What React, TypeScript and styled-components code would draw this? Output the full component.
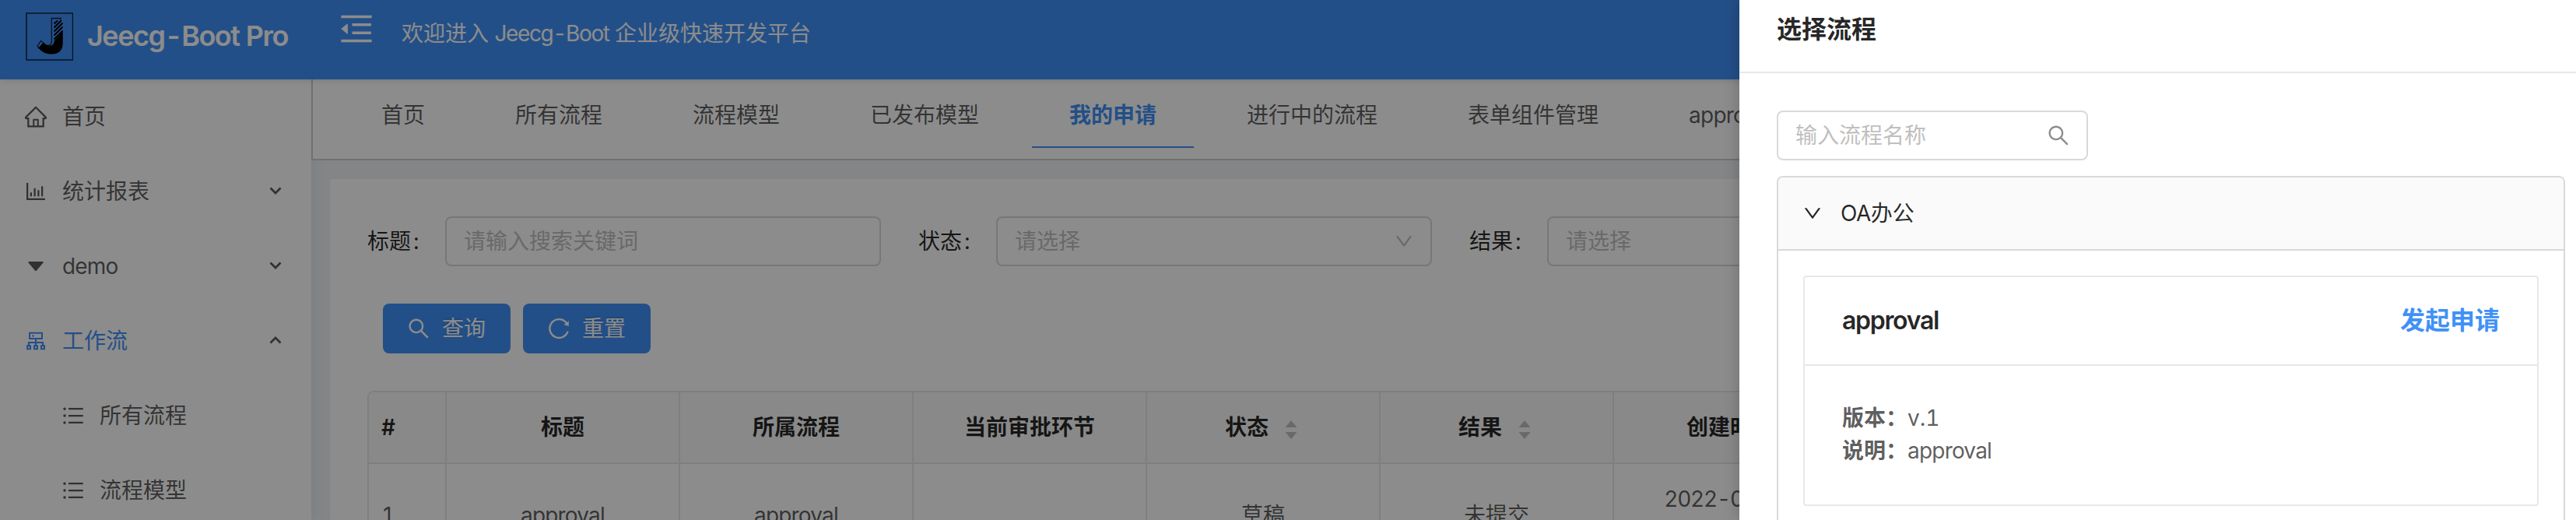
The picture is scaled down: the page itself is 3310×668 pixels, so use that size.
import React from 'react';
import styled, { createGlobalStyle, css } from 'styled-components';
import {
  AiOutlineHome,
  AiOutlineBarChart,
  AiOutlineCluster,
  AiOutlineBars,
  AiOutlineSearch,
  AiOutlineReload,
  AiOutlineDown,
  AiOutlineMenuFold,
} from 'react-icons/ai';

const color = {
  primary: '#4091f7',
  heading: 'rgba(0, 0, 0, 0.85)',
  text: 'rgba(0, 0, 0, 0.65)',
  muted: 'rgba(0, 0, 0, 0.45)',
  placeholder: '#bfbfbf',
  border: '#d9d9d9',
  split: '#e8e8e8',
  soft: '#fafafa',
  page: '#f0f2f5',
};

const GlobalStyle = createGlobalStyle`
  *, *::before, *::after { box-sizing: border-box; }
  body {
    margin: 0;
    overflow: hidden;
    font-family: Inter, 'Noto Sans CJK SC', sans-serif;
    font-size: 28px;
    line-height: 42px;
    color: ${color.text};
    font-variant-numeric: tabular-nums;
  }
`;

const Screen = styled.div`
  position: relative;
  width: 3310px;
  height: 668px;
  overflow: hidden;
  background: ${color.page};
`;

const Shell = styled.div`
  display: flex;
  flex-direction: column;
  height: 100%;
`;

const Latin = styled.span<{ $tight?: number }>`
  letter-spacing: ${(p) => -(p.$tight ?? 0.8)}px;
`;

/* ---------- top bar ---------- */

const TopBar = styled.header`
  position: relative;
  z-index: 3;
  display: flex;
  flex: none;
  height: 102px;
  background: ${color.primary};
  color: #fff;
  box-shadow: 0 2px 8px rgba(0, 21, 41, 0.12);
`;

const Brand = styled.div`
  display: flex;
  align-items: flex-start;
  width: 400px;
  padding: 16px 0 0 33px;
`;

const BrandName = styled.h1`
  margin: 9px 0 0 18px;
  font-size: 36px;
  line-height: 42px;
  font-weight: 600;
  letter-spacing: -1.5px;
  white-space: nowrap;
`;

const FoldButton = styled.span`
  display: flex;
  padding: 15px 0 0 36px;
  font-size: 44px;
`;

const Welcome = styled.span`
  margin: 22px 0 0 36px;
  white-space: nowrap;
`;

/* ---------- side menu ---------- */

const Body = styled.div`
  display: flex;
  flex: 1;
  min-height: 0;
`;

const Sider = styled.nav`
  position: relative;
  z-index: 1;
  flex: none;
  width: 400px;
  background: #fff;
  box-shadow: 4px 0 16px rgba(29, 35, 41, 0.05);
`;

const MenuItem = styled.div<{ $active?: boolean; $nested?: boolean }>`
  display: flex;
  align-items: center;
  height: 96px;
  padding: 0 38px 0 ${(p) => (p.$nested ? 80 : 32)}px;
  color: ${(p) => (p.$active ? color.primary : color.text)};
`;

const MenuIcon = styled.span`
  display: flex;
  flex: none;
  width: 28px;
  margin-right: 20px;
`;

const MenuLabel = styled.span`
  flex: 1;
`;

const Chevron = styled.svg`
  width: 16px;
  height: 12px;
  margin-top: -3px;
  fill: none;
  stroke: ${color.text};
  stroke-width: 2.7;
`;

/* ---------- main area ---------- */

const Main = styled.main`
  display: flex;
  flex: 1;
  flex-direction: column;
  min-width: 0;
`;

const TabBar = styled.div`
  position: relative;
  z-index: 2;
  display: flex;
  flex: none;
  gap: 20px;
  height: 104px;
  padding-left: 40px;
  background: #fff;
  border: solid #ccc;
  border-width: 0 0 2px 2px;
`;

const Tab = styled.div<{ $active?: boolean }>`
  height: 88px;
  padding: 25px 48px 0;
  white-space: nowrap;
  border-bottom: 2px solid transparent;
  ${(p) =>
    p.$active &&
    css`
      color: ${color.primary};
      font-weight: 700;
      border-bottom-color: ${color.primary};
    `}
`;

const Card = styled.section`
  flex: 1;
  margin: 24px 0 0 24px;
  padding: 48px;
  background: #fff;
  border-radius: 4px;
  overflow: hidden;
`;

const SearchForm = styled.div`
  display: flex;
  gap: 48px;
`;

const Field = styled.div`
  display: flex;
  align-items: center;
  flex: none;
`;

const FieldLabel = styled.label`
  width: 100px;
  color: ${color.heading};
  &::after {
    content: ':';
    margin-left: 3px;
  }
`;

const Control = styled.div<{ $width: number }>`
  display: flex;
  align-items: center;
  justify-content: space-between;
  width: ${(p) => p.$width}px;
  height: 64px;
  padding: 0 22px;
  color: ${color.placeholder};
  background: #fff;
  border: 2px solid ${color.border};
  border-radius: 8px;
`;

const ControlIcon = styled.span<{ $tone?: string }>`
  display: flex;
  color: ${(p) => p.$tone ?? color.placeholder};
`;

const Actions = styled.div`
  display: flex;
  gap: 16px;
  margin: 48px 0 48px 20px;
`;

const Button = styled.button`
  display: flex;
  align-items: center;
  gap: 16px;
  height: 64px;
  padding: 0 32px;
  border: 0;
  border-radius: 8px;
  background: ${color.primary};
  color: #fff;
  font: inherit;
  text-shadow: 0 -2px 0 rgba(0, 0, 0, 0.12);
`;

/* ---------- table ---------- */

const Table = styled.div`
  width: 2740px;
  border: solid ${color.split};
  border-width: 2px 0 0 2px;
  border-radius: 8px 0 0 0;
  overflow: hidden;
`;

const Row = styled.div<{ $head?: boolean }>`
  display: grid;
  grid-template-columns: 100px repeat(8, 300px);
  height: ${(p) => (p.$head ? 92 : 134)}px;
  border-bottom: 2px solid ${color.split};
  ${(p) =>
    p.$head &&
    css`
      background: ${color.soft};
      color: ${color.heading};
      font-weight: 600;
    `}
`;

const Cell = styled.div<{ $left?: boolean }>`
  display: flex;
  align-items: center;
  justify-content: ${(p) => (p.$left ? 'flex-start' : 'center')};
  padding: 0 16px;
  text-align: center;
  border-right: 2px solid ${color.split};
`;

const Sorter = styled.svg`
  width: 16px;
  height: 24px;
  margin: 5px 5px 0 21px;
  fill: ${color.placeholder};
`;

/* ---------- drawer ---------- */

const Mask = styled.div`
  position: absolute;
  inset: 0;
  z-index: 10;
  background: rgba(0, 0, 0, 0.45);
`;

const Drawer = styled.aside`
  position: absolute;
  top: 0;
  right: 0;
  bottom: 0;
  z-index: 11;
  width: 1075px;
  background: #fff;
  box-shadow: -4px 0 16px rgba(0, 0, 0, 0.15);
`;

const DrawerTitle = styled.h2`
  height: 94px;
  margin: 0;
  padding: 16px 48px 0;
  font-size: 32px;
  line-height: 44px;
  font-weight: 600;
  color: ${color.heading};
  border-bottom: 2px solid ${color.split};
`;

const DrawerBody = styled.div`
  display: flex;
  flex-direction: column;
  gap: 20px;
  padding: 48px 14px 0 48px;
`;

const Collapse = styled.div`
  height: 520px;
  border: 2px solid ${color.border};
  border-radius: 8px;
  overflow: hidden;
`;

const CollapseHeader = styled.div`
  display: flex;
  align-items: center;
  gap: 24px;
  height: 94px;
  padding: 0 32px;
  background: ${color.soft};
  color: ${color.heading};
  border-bottom: 2px solid ${color.border};
`;

const ProcessCard = styled.article`
  height: 296px;
  margin: 32px;
  border: 2px solid ${color.split};
  border-radius: 4px;
`;

const ProcessHeader = styled.div`
  display: flex;
  align-items: center;
  justify-content: space-between;
  height: 114px;
  padding: 0 48px;
  font-size: 32px;
  font-weight: 600;
  color: ${color.heading};
  border-bottom: 2px solid ${color.split};
`;

const StartLink = styled.a`
  color: ${color.primary};
`;

const ProcessBody = styled.div`
  padding: 46px 48px;
`;

const Detail = styled.p`
  margin: 0;
`;

const Strong = styled.b`
  font-weight: 700;
`;

const antBox = '64 64 896 896';

const Logo = () => (
  <svg width="61" height="62" viewBox="0 0 61 62" fill="none">
    <rect x="1" y="1" width="59.5" height="60" stroke="#0c2238" strokeWidth="1.5" />
    <path
      d="M45 11V7.500H33.300V37c0 5-4 6.500-7.600 4.500L19.500 36.500 15 43.500l2 2.500 6-6.500"
      stroke="#0c2238"
      strokeWidth="1.300"
    />
    <path
      d="M47.700 24v16c0 9-6 13.500-14 13.500-8 0-13-2.500-17.200-8L22.500 39c3 3 6 4.200 9 3.700 3-.5 4.700-2 5.200-6.200z"
      fill="#000"
    />
    <path
      d="M36.500 14.500l4.500-4M36.500 19.500l9-9M36.500 24.500L47.500 13.500M36.500 29.500l11-11M36.500 34.500l11-11"
      stroke="#000"
      strokeWidth="2"
    />
  </svg>
);

const Arrow = ({ up }: { up?: boolean }) => (
  <Chevron viewBox="0 0 16 12">
    <path d={up ? 'M1.500 9.500L8 3l6.500 6.500' : 'M1.500 2.500L8 9l6.500-6.500'} />
  </Chevron>
);

const CaretDown = () => (
  <svg width="28" height="28" viewBox="0 0 28 28" fill="currentColor">
    <path d="M5.200 8h17.600c.8 0 1.200.8.7 1.400l-8.500 10c-.5.7-1.500.7-2 0l-8.500-10C4 8.800 4.400 8 5.200 8z" />
  </svg>
);

const SortArrows = () => (
  <Sorter viewBox="0 0 16 24">
    <path d="M8 0l7.500 9H.5zM8 24l7.500-9H.5z" />
  </Sorter>
);

type Menu = {
  label: string;
  icon: React.ReactNode;
  active?: boolean;
  nested?: boolean;
  arrow?: 'up' | 'down';
};

const menus: Menu[] = [
  { label: '首页', icon: <AiOutlineHome viewBox={antBox} /> },
  { label: '统计报表', icon: <AiOutlineBarChart viewBox={antBox} />, arrow: 'down' },
  { label: 'demo', icon: <CaretDown />, arrow: 'down' },
  { label: '工作流', icon: <AiOutlineCluster viewBox={antBox} />, active: true, arrow: 'up' },
  { label: '所有流程', icon: <AiOutlineBars viewBox={antBox} />, nested: true },
  { label: '流程模型', icon: <AiOutlineBars viewBox={antBox} />, nested: true },
];

const tabs = [
  '首页',
  '所有流程',
  '流程模型',
  '已发布模型',
  '我的申请',
  '进行中的流程',
  '表单组件管理',
  'approval',
];

const columns = [
  { title: '标题' },
  { title: '所属流程' },
  { title: '当前审批环节' },
  { title: '状态', sortable: true },
  { title: '结果', sortable: true },
  { title: '创建时间' },
];

const fit = (text: string) => (/^[a-z]+$/.test(text) ? <Latin>{text}</Latin> : text);

export default function App() {
  return (
    <Screen>
      <GlobalStyle />
      <Shell>
        <TopBar>
          <Brand>
            <Logo />
            <BrandName>Jeecg-Boot Pro</BrandName>
          </Brand>
          <FoldButton>
            <AiOutlineMenuFold viewBox={antBox} />
          </FoldButton>
          <Welcome>
            欢迎进入 <Latin $tight={1.4}>Jeecg-Boot</Latin> 企业级快速开发平台
          </Welcome>
        </TopBar>

        <Body>
          <Sider>
            {menus.map((m) => (
              <MenuItem key={m.label} $active={m.active} $nested={m.nested}>
                <MenuIcon>{m.icon}</MenuIcon>
                <MenuLabel>{fit(m.label)}</MenuLabel>
                {m.arrow && <Arrow up={m.arrow === 'up'} />}
              </MenuItem>
            ))}
          </Sider>

          <Main>
            <TabBar>
              {tabs.map((t) => (
                <Tab key={t} $active={t === '我的申请'}>
                  {fit(t)}
                </Tab>
              ))}
            </TabBar>

            <Card>
              <SearchForm>
                <Field>
                  <FieldLabel>标题</FieldLabel>
                  <Control $width={560}>请输入搜索关键词</Control>
                </Field>
                {['状态', '结果'].map((label) => (
                  <Field key={label}>
                    <FieldLabel>{label}</FieldLabel>
                    <Control $width={560}>
                      请选择
                      <ControlIcon>
                        <AiOutlineDown viewBox={antBox} size={24} />
                      </ControlIcon>
                    </Control>
                  </Field>
                ))}
              </SearchForm>

              <Actions>
                <Button>
                  <AiOutlineSearch viewBox={antBox} />
                  查询
                </Button>
                <Button>
                  <AiOutlineReload viewBox={antBox} />
                  重置
                </Button>
              </Actions>

              <Table>
                <Row $head>
                  <Cell $left>#</Cell>
                  {columns.map((c) => (
                    <Cell key={c.title}>
                      {c.title}
                      {c.sortable && <SortArrows />}
                    </Cell>
                  ))}
                </Row>
                <Row>
                  <Cell $left>1</Cell>
                  <Cell>{fit('approval')}</Cell>
                  <Cell>{fit('approval')}</Cell>
                  <Cell />
                  <Cell>草稿</Cell>
                  <Cell>未提交</Cell>
                  <Cell>
                    <Latin $tight={1.2}>
                      2022-04-01
                      <br />
                      10:20:30
                    </Latin>
                  </Cell>
                </Row>
              </Table>
            </Card>
          </Main>
        </Body>
      </Shell>

      <Mask />

      <Drawer>
        <DrawerTitle>选择流程</DrawerTitle>
        <DrawerBody>
          <Control $width={400}>
            输入流程名称
            <ControlIcon $tone={color.muted}>
              <AiOutlineSearch viewBox={antBox} size={28} />
            </ControlIcon>
          </Control>
          <Collapse>
            <CollapseHeader>
              <AiOutlineDown viewBox={antBox} size={24} />
              <span>
                <Latin $tight={0.5}>OA</Latin>办公
              </span>
            </CollapseHeader>
            <ProcessCard>
              <ProcessHeader>
                <Latin $tight={1.3}>approval</Latin>
                <StartLink>发起申请</StartLink>
              </ProcessHeader>
              <ProcessBody>
                <Detail>
                  <Strong>版本：</Strong>v.1
                </Detail>
                <Detail>
                  <Strong>说明：</Strong>
                  {fit('approval')}
                </Detail>
              </ProcessBody>
            </ProcessCard>
          </Collapse>
        </DrawerBody>
      </Drawer>
    </Screen>
  );
}
